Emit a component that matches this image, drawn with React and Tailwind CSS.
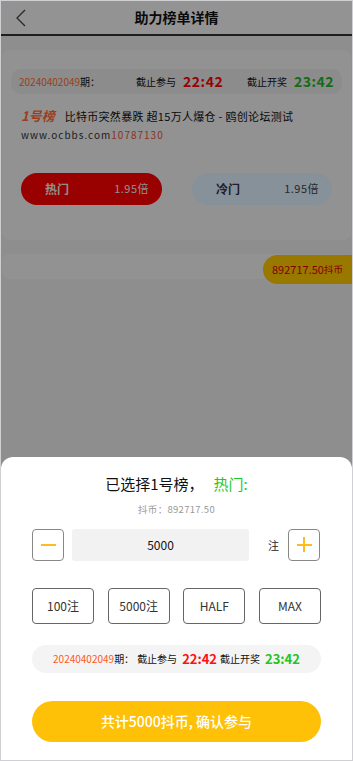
import React from 'react';

const cjk = { fontFamily: '"Noto Sans CJK SC", "Noto Sans", sans-serif' };

export default function App() {
  return (
    <div style={cjk} className="relative w-[353px] h-[761px] overflow-hidden border border-[#cfcfd4] bg-[#ededed]">
      {/* header */}
      <div className="h-[35px] bg-[#f5f5f5] border-b-2 border-[#333] flex items-center justify-center relative">
        <svg className="absolute left-[13px] top-[7px]" width="14" height="20" viewBox="0 0 14 20" fill="none">
          <path d="M11 2 L3 10 L11 18" stroke="#444" strokeWidth="1.3" />
        </svg>
        <h1 className="text-[14px] font-bold text-[#111]">助力榜单详情</h1>
      </div>

      {/* card */}
      <div className="mt-[14px] mx-[1px] rounded-[8px] bg-[#f4f4f4] pt-[19px] pb-[35px]">
        <div className="mx-[9px] h-[25px] rounded-[10px] bg-[#e9e9e9] flex items-center pl-[8px] pr-[8px]">
          <div className="flex items-center text-[10px] text-[#111]">
            <span className="text-[#ff6a35]">20240402049</span>
            <span>期：</span>
          </div>
          <div className="ml-[36px] flex items-center text-[10px] text-[#111]">
            <span>截止参与</span>
            <span className="ml-[7px] text-[14px] font-bold text-[#ff0000] tracking-[0.5px]">22:42</span>
          </div>
          <div className="ml-auto flex items-center text-[10px] text-[#111]">
            <span>截止开奖</span>
            <span className="ml-[7px] text-[14px] font-bold text-[#22b522] tracking-[0.5px]">23:42</span>
          </div>
        </div>

        <div className="mt-[12px] ml-[19px] flex items-center">
          <span className="text-[13px] font-bold italic text-[#ff6a35]">1号榜</span>
          <span className="ml-[10px] text-[11px] text-[#111] tracking-[0.3px] whitespace-pre">比特币突然暴跌 超15万人爆仓 - 鸥创论坛测试</span>
        </div>
        <div className="ml-[19px] mt-[1px] text-[10px] text-[#333] tracking-[1px]">
          www.ocbbs.com<span className="text-[#e8523c]">10787130</span>
        </div>

        <div className="mt-[31px] flex items-center justify-between px-[19px]">
          <div className="w-[141px] h-[32px] rounded-full bg-[#ff0000] flex items-center justify-between pl-[24px] pr-[13px]">
            <span className="text-[12px] font-bold text-[#eee]">热门</span>
            <span className="text-[11px] text-[#eee] tracking-[0.5px]">1.95倍</span>
          </div>
          <div className="w-[140px] h-[32px] rounded-full bg-[#e2f2ff] flex items-center justify-between pl-[24px] pr-[13px]">
            <span className="text-[12px] font-bold text-[#334]">冷门</span>
            <span className="text-[11px] text-[#444] tracking-[0.5px]">1.95倍</span>
          </div>
        </div>
      </div>

      {/* balance bar */}
      <div className="mt-[14px] ml-[1px] h-[25px] rounded-[8px] bg-[#f4f4f4] relative">
        <div className="absolute right-[-2px] top-[1px] h-[29px] w-[91px] rounded-l-full bg-[#ffc800] flex items-center pl-[9px] text-[11px] text-[#dd0000]">
          892717.50<span className="text-[9.5px]">抖币</span>
        </div>
      </div>

      {/* overlay */}
      <div className="absolute inset-0 bg-black/40" />

      {/* bottom sheet */}
      <div className="absolute left-0 right-0 bottom-0 h-[303px] bg-white rounded-t-[12px] flex flex-col items-center">
        <div className="mt-[16px] flex items-center text-[15px] text-[#111]">
          <span>已选择1号榜，</span>
          <span className="ml-[10px] text-[#1ec81e]">热门:</span>
        </div>
        <div className="mt-[6px] text-[9.5px] text-[#999] tracking-[0.3px]">抖币：892717.50</div>

        <div className="mt-[13px] w-full px-[31px] flex items-center">
          <div className="w-[32px] h-[32px] rounded-[4px] border border-[#888] flex items-center justify-center">
            <div className="w-[15px] h-[2px] bg-[#fdbb1e]" />
          </div>
          <div className="ml-[8px] w-[177px] h-[32px] rounded-[3px] bg-[#f2f2f2] flex items-center justify-center text-[12px] text-[#111]">5000</div>
          <span className="ml-[19px] text-[11px] text-[#222]">注</span>
          <div className="ml-[9px] w-[32px] h-[32px] rounded-[4px] border border-[#888] flex items-center justify-center relative">
            <div className="w-[15px] h-[2px] bg-[#fdbb1e]" />
            <div className="absolute w-[2px] h-[15px] bg-[#fdbb1e]" />
          </div>
        </div>

        <div className="mt-[27px] w-full px-[31px] flex items-center justify-between">
          {['100注', '5000注', 'HALF', 'MAX'].map((t) => (
            <div key={t} className="w-[62px] h-[36px] rounded-[4px] border border-[#666] flex items-center justify-center text-[12px] text-[#333]">
              {t}
            </div>
          ))}
        </div>

        <div className="mt-[21px] w-[289px] h-[28px] rounded-full bg-[#f4f4f4] flex items-center justify-center">
          <div className="flex items-center text-[10px] text-[#111]">
            <span className="text-[#ff5a22]">20240402049</span>
            <span>期：</span>
            <span className="ml-[3px]">截止参与</span>
            <span className="ml-[5px] text-[13px] font-bold text-[#ff1010]">22:42</span>
            <span className="ml-[3px]">截止开奖</span>
            <span className="ml-[5px] text-[13px] font-bold text-[#22c522]">23:42</span>
          </div>
        </div>

        <div className="mt-[28px] w-[289px] h-[41px] rounded-full bg-[#ffc107] flex items-center justify-center text-[14px] font-medium text-white">
          共计5000抖币, 确认参与
        </div>
      </div>
    </div>
  );
}
